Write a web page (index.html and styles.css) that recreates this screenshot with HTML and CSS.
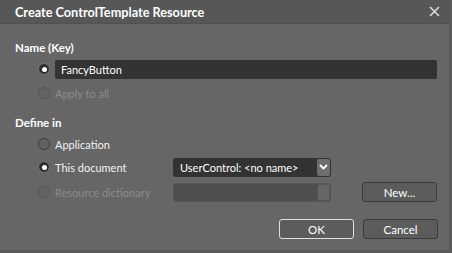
FILE: index.html
```html
<!DOCTYPE html>
<html lang="en">
<head>
    <meta charset="UTF-8">
    <title>Create ControlTemplate Resource</title>
    <link rel="stylesheet" href="styles.css">
</head>
<body>
    <div class="dialog">
        <div class="titlebar">
            <span class="title">Create ControlTemplate Resource</span>
            <svg class="close" width="11" height="11" viewBox="0 0 11 11">
                <path d="M1 1 L10 10 M10 1 L1 10" stroke="#d8d8d8" stroke-width="1.6"/>
            </svg>
        </div>
        <div class="content">
            <div class="section-label">Name (Key)</div>
            <div class="row name-row">
                <span class="radio checked"></span>
                <div class="textbox">FancyButton</div>
            </div>
            <div class="row disabled apply-row">
                <span class="radio"></span>
                <span class="opt">Apply to all</span>
            </div>

            <div class="section-label define">Define in</div>
            <div class="row app-row">
                <span class="radio"></span>
                <span class="opt">Application</span>
            </div>
            <div class="row doc-row">
                <span class="radio checked"></span>
                <span class="opt wide">This document</span>
                <div class="combo">
                    <span class="combo-text">UserControl: &lt;no name&gt;</span>
                    <span class="combo-btn">
                        <svg width="9" height="6" viewBox="0 0 9 6">
                            <path d="M1 1 L4.5 4.5 L8 1" stroke="#fff" stroke-width="1.8" fill="none"/>
                        </svg>
                    </span>
                </div>
            </div>
            <div class="row disabled dict-row">
                <span class="radio"></span>
                <span class="opt wide">Resource dictionary</span>
                <div class="combo off">
                    <span class="combo-text"></span>
                    <span class="combo-btn"></span>
                </div>
                <button class="btn new-btn">New...</button>
            </div>

            <div class="actions">
                <button class="btn default">OK</button>
                <button class="btn">Cancel</button>
            </div>
        </div>
    </div>
</body>
</html>
```

FILE: styles.css
```css
body {
    margin: 0;
    padding: 0;
    background-color: #4a4a4a;
    font-family: Lato, "Open Sans", sans-serif;
    font-size: 11px;
    color: #f2f2f2;
}
.dialog {
    width: 449px;
    height: 250px;
    background-color: #666666;
    border-right: 3px solid #5a5a5a;
    border-bottom: 3px solid #5a5a5a;
}
.titlebar {
    height: 23px;
    background-color: #575757;
    border-bottom: 1px solid #505050;
    display: flex;
    align-items: center;
    justify-content: space-between;
    padding: 0 9px 0 15px;
}
.title {
    font-weight: bold;
    font-size: 12.7px;
    color: #fff;
}
.close {
    display: block;
}
.content {
    padding: 15px 0 0 15px;
}
.section-label {
    font-weight: bold;
    font-size: 11.5px;
    color: #fff;
    height: 18px;
    line-height: 18px;
}
.define {
    margin-top: 11px;
}
.row {
    display: flex;
    align-items: center;
    height: 20px;
    padding-left: 23px;
    white-space: nowrap;
}
.name-row {
    margin-top: 2px;
}
.apply-row {
    margin-top: 4px;
}
.app-row {
    margin-top: 2px;
}
.doc-row {
    margin-top: 3px;
}
.dict-row {
    margin-top: 5px;
}
.radio {
    width: 10px;
    height: 10px;
    border: 1px solid #3c3c3c;
    border-radius: 50%;
    background-color: #626262;
    margin-right: 5px;
    flex-shrink: 0;
    position: relative;
}
.radio.checked {
    background-color: #2e2e2e;
    border-color: #777;
}
.radio.checked::after {
    content: "";
    position: absolute;
    left: 2.5px;
    top: 2.5px;
    width: 5px;
    height: 5px;
    border-radius: 50%;
    background-color: #fff;
}
.disabled .radio {
    border-color: #555;
    background-color: #646464;
}
.disabled .opt {
    color: #8c8c8c;
}
.opt.wide {
    width: 118px;
}
.textbox {
    flex: 1;
    height: 19px;
    line-height: 19px;
    background-color: #333333;
    border-radius: 2px;
    margin-right: 12px;
    padding-left: 6px;
    color: #fff;
}
.combo {
    width: 158px;
    height: 19px;
    background-color: #333333;
    border-radius: 3px;
    display: flex;
    align-items: center;
    justify-content: space-between;
    flex-shrink: 0;
}
.combo-text {
    padding-left: 7px;
    color: #fff;
}
.combo-btn {
    width: 13px;
    height: 17px;
    margin-right: 1px;
    background-color: #6e6e6e;
    border-radius: 2px;
    display: flex;
    align-items: center;
    justify-content: center;
}
.combo.off {
    background-color: #4e4e4e;
    border: 1px solid #555;
    box-sizing: border-box;
}
.combo.off .combo-btn {
    background-color: #666;
    border: 1px solid #555;
    box-sizing: border-box;
    margin-right: 0;
}
.btn {
    width: 75px;
    height: 20px;
    background-color: #5c5c5c;
    border: 1px solid #3a3a3a;
    border-radius: 3px;
    font-family: Lato, "Open Sans", sans-serif;
    font-size: 11.5px;
    color: #fff;
    padding: 0;
    flex-shrink: 0;
}
.new-btn {
    margin-left: 31px;
}
.btn.default {
    border-color: #e0e0e0;
}
.actions {
    display: flex;
    justify-content: flex-end;
    gap: 9px;
    margin-top: 17px;
    padding-right: 11px;
}
```
